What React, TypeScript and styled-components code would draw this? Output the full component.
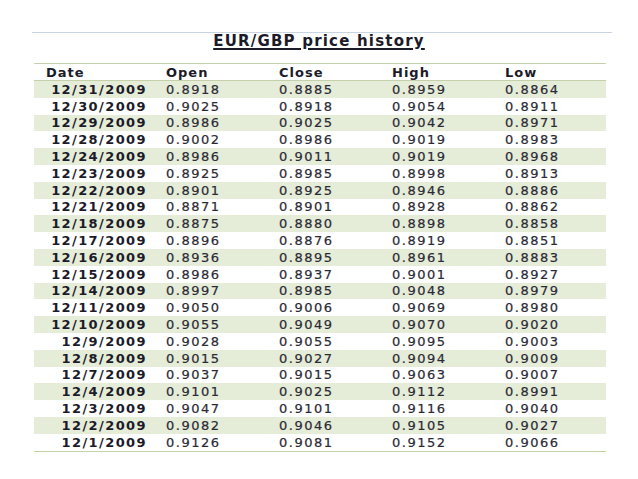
import React from "react";
import styled, { createGlobalStyle } from "styled-components";

const rows: [string, string, string, string, string][] = [
  ["12/31/2009", "0.8918", "0.8885", "0.8959", "0.8864"],
  ["12/30/2009", "0.9025", "0.8918", "0.9054", "0.8911"],
  ["12/29/2009", "0.8986", "0.9025", "0.9042", "0.8971"],
  ["12/28/2009", "0.9002", "0.8986", "0.9019", "0.8983"],
  ["12/24/2009", "0.8986", "0.9011", "0.9019", "0.8968"],
  ["12/23/2009", "0.8925", "0.8985", "0.8998", "0.8913"],
  ["12/22/2009", "0.8901", "0.8925", "0.8946", "0.8886"],
  ["12/21/2009", "0.8871", "0.8901", "0.8928", "0.8862"],
  ["12/18/2009", "0.8875", "0.8880", "0.8898", "0.8858"],
  ["12/17/2009", "0.8896", "0.8876", "0.8919", "0.8851"],
  ["12/16/2009", "0.8936", "0.8895", "0.8961", "0.8883"],
  ["12/15/2009", "0.8986", "0.8937", "0.9001", "0.8927"],
  ["12/14/2009", "0.8997", "0.8985", "0.9048", "0.8979"],
  ["12/11/2009", "0.9050", "0.9006", "0.9069", "0.8980"],
  ["12/10/2009", "0.9055", "0.9049", "0.9070", "0.9020"],
  ["12/9/2009", "0.9028", "0.9055", "0.9095", "0.9003"],
  ["12/8/2009", "0.9015", "0.9027", "0.9094", "0.9009"],
  ["12/7/2009", "0.9037", "0.9015", "0.9063", "0.9007"],
  ["12/4/2009", "0.9101", "0.9025", "0.9112", "0.8991"],
  ["12/3/2009", "0.9047", "0.9101", "0.9116", "0.9040"],
  ["12/2/2009", "0.9082", "0.9046", "0.9105", "0.9027"],
  ["12/1/2009", "0.9126", "0.9081", "0.9152", "0.9066"],
];

const headers = ["Date", "Open", "Close", "High", "Low"];

const App: React.FC = () => {
  return (
    <>
      <GlobalStyle />
      <Slide>
        <Rule />
        <Title>EUR/GBP price history</Title>
        <Table>
          <HeaderRow>
            {headers.map((h) => (
              <HeaderCell key={h}>{h}</HeaderCell>
            ))}
          </HeaderRow>
          {rows.map((r, i) => (
            <Row key={r[0]} shaded={i % 2 === 0}>
              <DateCell>{r[0]}</DateCell>
              <NumCell>{r[1]}</NumCell>
              <NumCell>{r[2]}</NumCell>
              <NumCell>{r[3]}</NumCell>
              <NumCell>{r[4]}</NumCell>
            </Row>
          ))}
        </Table>
      </Slide>
    </>
  );
};

const GlobalStyle = createGlobalStyle`
  html, body {
    margin: 0;
    padding: 0;
    background: #ffffff;
  }
  body {
    font-family: "DejaVu Sans", Verdana, sans-serif;
  }
`;

const Slide = styled.div`
  width: 638px;
  height: 479px;
  padding-top: 32px;
  box-sizing: border-box;
  display: flex;
  flex-direction: column;
  align-items: center;
`;

const Rule = styled.div`
  width: 580px;
  height: 1px;
  background: #c8d4e2;
  margin-left: 6px;
`;

const Title = styled.div`
  font-size: 15px;
  font-weight: bold;
  color: #1b1b2a;
  text-decoration: underline;
  text-decoration-thickness: 1.5px;
  text-underline-offset: 2px;
  letter-spacing: 1.2px;
  line-height: 17px;
  height: 30px;
`;

const Table = styled.div`
  width: 572px;
  margin-left: 2px;
  border-top: 1px solid #c3d0a9;
  border-bottom: 1px solid #c3d0a9;
  display: flex;
  flex-direction: column;
`;

const grid = `
  display: grid;
  grid-template-columns: 122px 113px 113px 113px 1fr;
  align-items: center;
`;

const HeaderRow = styled.div`
  ${grid}
  height: 16px;
  border-bottom: 1px solid #c3d0a9;
`;

const HeaderCell = styled.div`
  font-size: 13px;
  font-weight: bold;
  color: #1b1b2a;
  letter-spacing: 1px;
  padding-left: 12px;
  &:not(:first-child) {
    padding-left: 10px;
  }
`;

const Row = styled.div<{ shaded: boolean }>`
  ${grid}
  height: 16.8px;
  background: ${(p) => (p.shaded ? "#e5ecd7" : "#ffffff")};
`;

const DateCell = styled.div`
  font-size: 13px;
  font-weight: bold;
  color: #1b1b2a;
  letter-spacing: 1.4px;
  text-align: right;
  padding-right: 9px;
`;

const NumCell = styled.div`
  font-size: 13px;
  color: #2a2a36;
  letter-spacing: 1.5px;
  padding-left: 10px;
  -webkit-text-stroke: 0.2px #2a2a36;
`;

export default App;
